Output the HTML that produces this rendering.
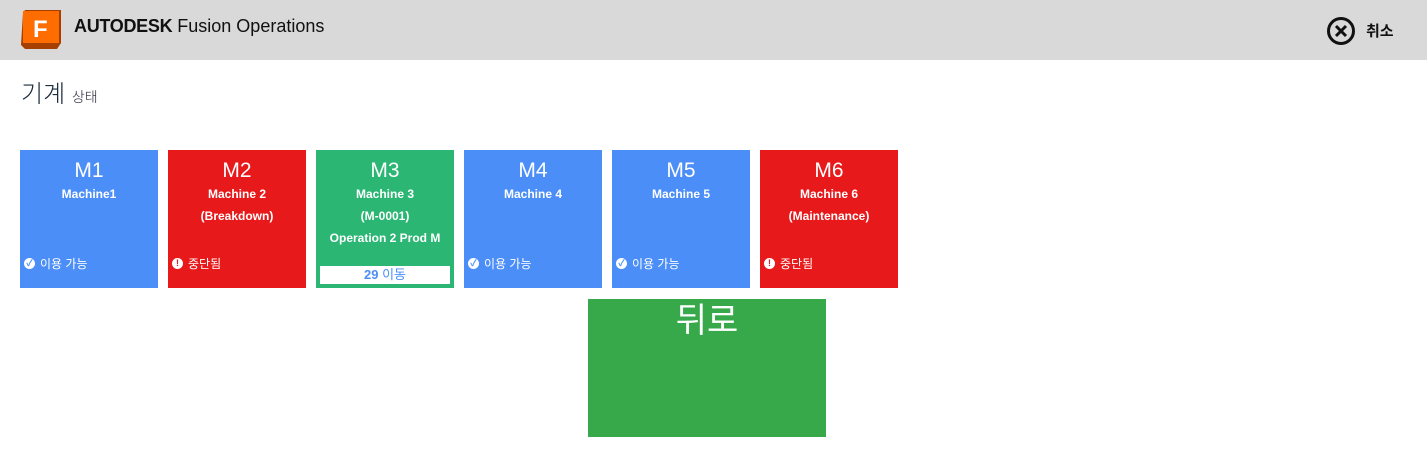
<!DOCTYPE html>
<html><head><meta charset="utf-8"><style>
body{margin:0;width:1427px;height:455px;background:#fff;font-family:"Liberation Sans","Noto Sans CJK KR",sans-serif;position:relative;overflow:hidden}
.hdr{position:absolute;left:0;top:0;width:1427px;height:60px;background:#d9d9d9}
.tile{position:absolute;top:150px;width:138px;height:138px;color:#fff;text-align:center}
.tile .m{font-size:21px;margin-top:9px;line-height:24px}
.tile .l{font-size:12px;font-weight:bold;line-height:22px}
.tile .l:first-of-type{margin-top:2px}
.st{position:absolute;left:4px;top:105px;font-size:12px;display:flex;align-items:center}
.ic{width:11px;height:11px;border-radius:50%;background:#fff;margin-right:5px;font-size:9px;line-height:11px;text-align:center;font-weight:bold}
.b{background:#4b8ef7}.r{background:#e8191b}.g{background:#2bb673}
</style></head><body>
<div class="hdr">
<svg style="position:absolute;left:19px;top:9px" width="46" height="42" viewBox="0 0 46 42"><path d="M4 4 L6 1 H42 V34 L38 40 H6 L2 36 Z" fill="#a63f00"/><rect x="4" y="2" width="36" height="32" fill="#ff6d00"/><text x="14" y="28" font-family="Liberation Sans" font-weight="bold" font-size="24" fill="#fff">F</text></svg>
<div style="position:absolute;left:74px;top:16px;font-size:18px;color:#111"><b style="letter-spacing:-0.3px">AUTODESK</b> Fusion Operations</div>
<svg style="position:absolute;left:1326px;top:16px" width="30" height="30" viewBox="0 0 30 30"><circle cx="15" cy="15" r="12.5" fill="none" stroke="#111" stroke-width="3"/><path d="M10 10 L20 20 M20 10 L10 20" stroke="#111" stroke-width="3"/></svg>
<div style="position:absolute;left:1366px;top:20px;font-size:15px;font-weight:bold;color:#111">취소</div>
</div>
<div style="position:absolute;left:21px;top:74px;font-size:24px;color:#1a2a3a;font-weight:300">기계 <span style="font-size:14px;color:#223">상태</span></div>
<div class="tile b" style="left:20px"><div class="m">M1</div><div class="l">Machine1</div><div class="st"><span class="ic" style="color:#4b8ef7">✓</span>이용 가능</div></div>
<div class="tile r" style="left:168px"><div class="m">M2</div><div class="l">Machine 2</div><div class="l">(Breakdown)</div><div class="st"><span class="ic" style="color:#e8191b">!</span>중단됨</div></div>
<div class="tile g" style="left:316px"><div class="m">M3</div><div class="l">Machine 3</div><div class="l">(M-0001)</div><div class="l">Operation 2 Prod M</div><div style="position:absolute;left:4px;top:116px;width:130px;height:18px;background:#fff;color:#4b8ef7;font-size:13px;line-height:18px"><b>29</b> 이동</div></div>
<div class="tile b" style="left:464px"><div class="m">M4</div><div class="l">Machine 4</div><div class="st"><span class="ic" style="color:#4b8ef7">✓</span>이용 가능</div></div>
<div class="tile b" style="left:612px"><div class="m">M5</div><div class="l">Machine 5</div><div class="st"><span class="ic" style="color:#4b8ef7">✓</span>이용 가능</div></div>
<div class="tile r" style="left:760px"><div class="m">M6</div><div class="l">Machine 6</div><div class="l">(Maintenance)</div><div class="st"><span class="ic" style="color:#e8191b">!</span>중단됨</div></div>
<div style="position:absolute;left:588px;top:299px;width:238px;height:138px;background:#37a94a;color:#fff;text-align:center;font-size:34px;line-height:44px;padding-top:0"><div style="margin-top:0">뒤로</div></div>
</body></html>
